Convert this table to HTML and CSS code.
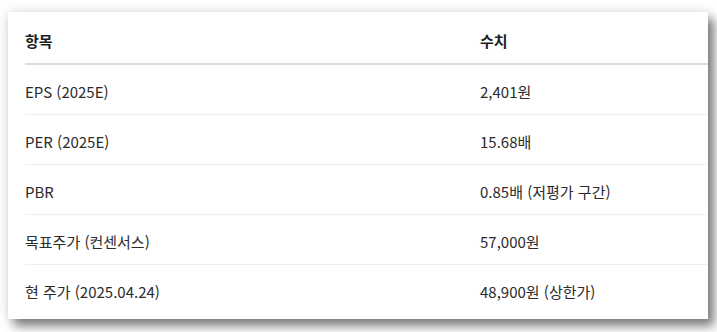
FILE: index.html
```html
<!DOCTYPE html>
<html lang="ko">
<head>
<meta charset="utf-8">
<link rel="stylesheet" href="styles.css">
</head>
<body>
<div class="card">
  <table class="metrics">
    <thead>
      <tr><th class="col-name">항목</th><th>수치</th></tr>
    </thead>
    <tbody>
      <tr><td>EPS (2025E)</td><td>2,401원</td></tr>
      <tr><td>PER (2025E)</td><td>15.68배</td></tr>
      <tr><td>PBR</td><td>0.85배 (저평가 구간)</td></tr>
      <tr><td>목표주가 (컨센서스)</td><td>57,000원</td></tr>
      <tr><td>현 주가 (2025.04.24)</td><td>48,900원 (상한가)</td></tr>
    </tbody>
  </table>
</div>
</body>
</html>
```

FILE: styles.css
```css
html, body {
  margin: 0;
  padding: 0;
  background: #ffffff;
}
body {
  width: 717px;
  height: 332px;
  overflow: hidden;
  font-family: "Noto Sans CJK KR", "Noto Sans", sans-serif;
  font-size: 15px;
  color: #222;
}
.card {
  margin: 12px 0 0 8px;
  width: 700px;
  height: 307px;
  box-sizing: border-box;
  padding: 0 0 6px 17px;
  background: #fff;
  overflow: hidden;
  box-shadow: 6px 7px 10px rgba(0, 0, 0, 0.5), 0 0 12px rgba(0, 0, 0, 0.12);
}
.metrics {
  width: 100%;
  border-collapse: collapse;
}
.metrics th,
.metrics td {
  text-align: left;
  padding: 0;
  line-height: 20px;
  white-space: nowrap;
}
.metrics th {
  font-weight: 700;
  color: #1e1e1e;
  padding: 19px 0 12px;
  border-bottom: 2px solid #ddd;
}
.metrics .col-name {
  width: 455px;
}
.metrics td {
  color: #2b2b2b;
  padding: 17px 0 12px;
  border-bottom: 1px solid #eee;
}
.metrics tbody tr:last-child td {
  border-bottom: none;
}
```
